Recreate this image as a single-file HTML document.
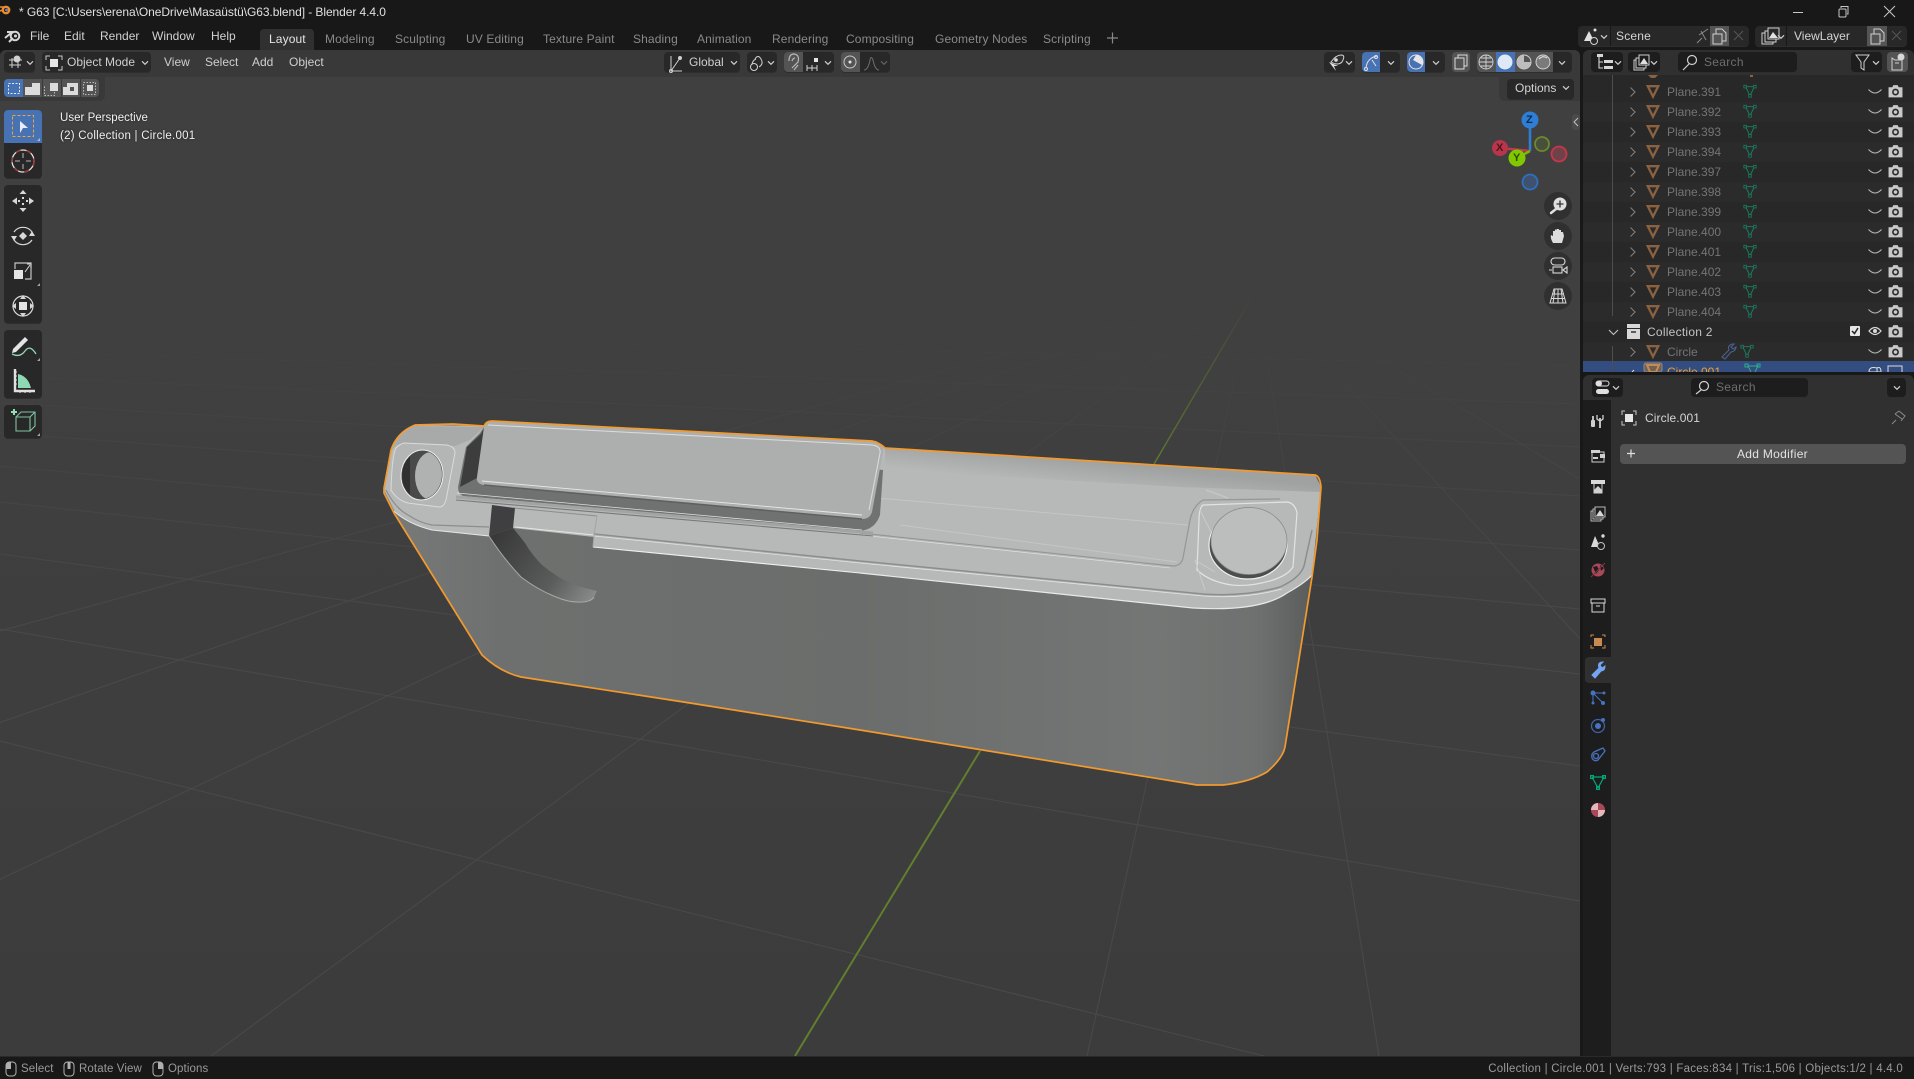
<!DOCTYPE html>
<html><head><meta charset="utf-8"><title>G63 - Blender</title>
<style>
html,body{margin:0;padding:0;background:#181818}
#r{position:relative;width:1914px;height:1079px;overflow:hidden;font-family:"Liberation Sans",sans-serif;font-size:12px;color:#d4d4d4;background:#181818}
#r div{position:absolute;box-sizing:border-box}
.t{white-space:nowrap;line-height:16px;height:16px}
.b{background:#282828;border-radius:4px;box-shadow:0 1px 0 #2e2e2e}
.tab{color:#8a8a8a;letter-spacing:.12px;top:31px}
.m{top:28px;color:#d2d2d2}
.h{top:54px;color:#cfcfcf}
.p{left:1667px;color:#747474;font-size:12px}
svg{position:absolute;left:0;top:0}
</style></head><body><div id="r">

<div style="left:0;top:50px;width:1580px;height:1006px;background:#404040;border-radius:6px 6px 0 0"></div>

<svg width="1914" height="1079" viewBox="0 0 1914 1079" fill="none">
<defs>
<clipPath id="vp"><rect x="0" y="50" width="1580" height="1006"/></clipPath>
<linearGradient id="gr" gradientUnits="userSpaceOnUse" x1="0" y1="295" x2="0" y2="640"><stop offset="0" stop-color="#404040"/><stop offset="1" stop-color="#494949"/></linearGradient>
<linearGradient id="fl" x1="0" y1="0" x2="0" y2="1"><stop offset="0" stop-color="#404040"/><stop offset="1" stop-color="#3c3c3c"/></linearGradient>
<linearGradient id="gl" gradientUnits="userSpaceOnUse" x1="0" y1="295" x2="0" y2="480"><stop offset="0" stop-color="#404040"/><stop offset="1" stop-color="#617f2c"/></linearGradient>
<linearGradient id="side" gradientUnits="userSpaceOnUse" x1="390" y1="0" x2="1322" y2="0"><stop offset="0" stop-color="#787a79"/><stop offset=".12" stop-color="#6e706f"/><stop offset=".5" stop-color="#6b6d6c"/><stop offset=".82" stop-color="#747675"/><stop offset=".93" stop-color="#6f7170"/><stop offset="1" stop-color="#575958"/></linearGradient>
<linearGradient id="topb" gradientUnits="userSpaceOnUse" x1="1100" y1="462" x2="1097" y2="490"><stop offset="0" stop-color="#a0a2a1"/><stop offset="1" stop-color="#b7b9b8"/></linearGradient>
<linearGradient id="gv" gradientUnits="userSpaceOnUse" x1="500" y1="530" x2="597" y2="600"><stop offset="0" stop-color="#39393a"/><stop offset=".6" stop-color="#5a5b5b"/><stop offset="1" stop-color="#8d8f8e"/></linearGradient>
<clipPath id="hole"><ellipse cx="422" cy="475" rx="20" ry="24" transform="rotate(5 422 475)"/></clipPath>
</defs>
<g clip-path="url(#vp)">
<rect x="0" y="300" width="1580" height="756" fill="url(#fl)"/>
<g stroke="url(#gr)" stroke-width="1">
<path d="M0 300L1580 312M0 312L1580 334M0 330L1580 366M0 351L1580 404M0 376L1580 447M0 403L1580 496M0 433L1580 550M0 466L1580 609M0 502L1580 674M0 554L1580 766M0 629L1580 901M0 741L1264 1056"/>
<path d="M1255 285L1379 1056M1255 285L211 1056M1255 285L-373 1056M1255 285L-957 1056M1255 285L1963 1056M1255 285L2547 1056M1255 285L-1541 1056M1255 285L1087 1056"/>
</g>
<path d="M1255 292L1154 464" stroke="url(#gl)" stroke-width="1.400"/>
<path d="M980 751L795 1056" stroke="#617f2c" stroke-width="2"/>

<!-- MODEL -->
<path d="M384 488L391 450Q397 432 415 425L453 424L484 426Q486 421 492 421L872 441Q880 443 885 448L1315 475Q1320 476 1321 487L1317 540L1312 577L1285 747Q1283 758 1267 772Q1250 782 1223 785L1197 785L860 730L690 703L521 677Q500 672 482 655L394 513L384 493Z" fill="url(#side)"/>
<path d="M384 490L394 510Q408 524 432 530L489 536L513 528L594 537L593 547L860 573L1193 608Q1260 612 1287 593Q1305 583 1312 575L1321 487L1315 475L885 448L876 441L492 421L484 426L415 425Q397 432 391 450Z" fill="#b7b9b8"/>
<path d="M885 448L1315 475L1321 487L1320 492L1180 487L885 470Z" fill="url(#topb)"/>
<path d="M392 450Q398 433 415 426L484 427L470 440L455 446L404 443Q396 444 392 450Z" fill="#a8aaa9"/>

<path d="M877 498L1188 525M900 525L1177 562" stroke="#c4c6c5" stroke-width="1"/>
<path d="M860 533L1173 566Q1181 566 1183 558L1190 520Q1193 506 1203 500L1280 499" stroke="#959796" stroke-width="1.200"/>
<path d="M860 535L1170 568" stroke="#e4e4e4" stroke-width=".6"/>
<path d="M860 561L1203 594Q1245 597 1280 587Q1300 578 1304 566L1312 530" stroke="#8c8e8d" stroke-width="1.500"/>
<path d="M860 563L1203 596Q1245 599 1282 589" stroke="#e4e4e4" stroke-width=".8"/>
<path d="M860 573L1193 608Q1260 612 1287 593Q1305 583 1312 575" stroke="#e8e8e8" stroke-width="1.200"/>
<path d="M1203 505L1287 502Q1295 503 1297 513L1293 567Q1288 575 1273 580Q1250 587 1232 585Q1210 582 1197 570L1199 520Q1199 508 1203 505Z" stroke="#e2e2e2" stroke-width="1.200"/>
<path d="M1195 560L1205 590M1200 510L1215 540M1195 560L1215 572M1206 490L1228 498" stroke="#c9cbca" stroke-width="1"/>
<ellipse cx="1248" cy="545" rx="39" ry="34" fill="#4c4c4c" stroke="#f0f0f0" stroke-width="1.200"/>
<ellipse cx="1249" cy="541" rx="38" ry="33.500" fill="#bcbebd" stroke="#858786" stroke-width=".7"/>

<path d="M391 490Q392 455 396 448Q400 444 404 443L447 445Q455 447 455 453L446 500Q444 507 439 507L408 503Q397 500 391 490Z" fill="#b4b6b5" stroke="#dadada" stroke-width="1"/>
<path d="M386 490Q395 508 408 515Q420 523 432 525L489 527" stroke="#8c8e8d" stroke-width="1.200"/>
<path d="M394 511Q408 524 432 530L489 536" stroke="#e6e6e6" stroke-width="1.100"/>
<ellipse cx="422" cy="475" rx="21" ry="25" transform="rotate(5 422 475)" fill="#4a4a4b" stroke="#eeeeee" stroke-width="1"/>
<g clip-path="url(#hole)"><rect x="400" y="450" width="10" height="50" fill="#303030"/><ellipse cx="431" cy="476" rx="16" ry="24" fill="#b0b2b1"/></g>

<path d="M480 433L466 447L458 487Q458 494 463 496L859 531Q875 530 880 515L883 470L484 427Z" fill="#707271"/>
<path d="M481 434L467 447L460 487L477 478L484 428Z" fill="#3d3d3e"/>
<path d="M456 497L873 533" stroke="#a2a4a3" stroke-width="3"/>
<path d="M457 493L862 530" stroke="#dcdcdc" stroke-width=".8"/>
<path d="M456 500L873 536" stroke="#777978" stroke-width="1.100"/>
<path d="M489 421Q484 423 484 427L477 477Q476 484 484 485L862 519Q870 519 872 512L883 452Q885 444 876 442Z" fill="#adafae"/>
<path d="M488 425L872 445Q881 446 880 453L869 510" stroke="#dcdcdc" stroke-width="1"/>
<path d="M484 485L862 519" stroke="#5f6160" stroke-width="1.600"/>
<path d="M482 481L862 515" stroke="#e8e8e8" stroke-width=".9"/>
<path d="M514 508L597 516" stroke="#8c8e8d" stroke-width="1"/>
<path d="M515 527L594 535" stroke="#e6e6e6" stroke-width="1"/>
<path d="M594 534L860 561" stroke="#8c8e8d" stroke-width="1.500"/>
<path d="M594 536L860 563" stroke="#e2e2e2" stroke-width=".7"/>
<path d="M593 547L860 573" stroke="#f0f0f0" stroke-width="1.100"/>
<path d="M597 516L594 535L593 547" stroke="#a3a5a4" stroke-width="1"/>
<path d="M492 505L515 508L513 528L489 536Z" fill="#3f3f41"/>
<path d="M489 536Q503 558 521 577Q538 590 556 597Q570 603 583 602Q592 601 594 597L597 591Q580 587 570 583Q555 576 542 565Q532 555 525 543Q518 534 513 528Z" fill="url(#gv)"/>
<path d="M489 536Q503 558 521 577Q538 590 556 597Q570 603 583 602Q592 601 594 597" stroke="#a7a9a8" stroke-width="1"/>
<path d="M384 488L391 450Q397 432 415 425L453 424L484 426Q486 421 492 421L872 441Q880 443 885 448L1315 475Q1320 476 1321 487L1317 540L1312 577L1285 747Q1283 758 1267 772Q1250 782 1223 785L1197 785L860 730L690 703L521 677Q500 672 482 655L394 513L384 493Z" stroke="#f29a2e" stroke-width="1.700" stroke-linejoin="round"/>
</g>
</svg>

<div style="left:0;top:50px;width:1580px;height:27px;background:#393939;border-radius:6px 6px 0 0"></div>
<div style="left:0;top:77px;width:105px;height:24px;background:#393939;border-radius:0 0 6px 0"></div>
<div style="left:1499px;top:77px;width:81px;height:24px;background:#393939;border-radius:0 0 0 6px"></div>

<div style="left:1580px;top:50px;width:3px;height:1006px;background:#181818"></div>
<div style="left:0;top:1056px;width:1914px;height:23px;background:#181818;border-top:1px solid #2a2a2a"></div>

<div style="left:1583px;top:50px;width:331px;height:322px;background:#282828;border-radius:6px 6px 0 0;overflow:hidden">
<div style="left:0;top:0;width:331px;height:25px;background:#303030"></div>
<div style="left:0;top:52px;width:331px;height:20px;background:#2b2b2b"></div>
<div style="left:0;top:92px;width:331px;height:20px;background:#2b2b2b"></div>
<div style="left:0;top:132px;width:331px;height:20px;background:#2b2b2b"></div>
<div style="left:0;top:172px;width:331px;height:20px;background:#2b2b2b"></div>
<div style="left:0;top:212px;width:331px;height:20px;background:#2b2b2b"></div>
<div style="left:0;top:252px;width:331px;height:20px;background:#2b2b2b"></div>
<div style="left:0;top:292px;width:331px;height:20px;background:#2b2b2b"></div>
<div style="left:0;top:311px;width:331px;height:11px;background:#334d80"></div>
</div>

<div style="left:1583px;top:375px;width:331px;height:681px;background:#303030;border-radius:6px 6px 0 0"></div>
<div style="left:1583px;top:400px;width:28px;height:656px;background:#1d1d1d"></div>
<div style="left:1585px;top:657px;width:26px;height:26px;background:#303030;border-radius:4px 0 0 4px"></div>
<div style="left:1620px;top:444px;width:286px;height:20px;background:#545454;border-radius:4px"></div>

<div style="left:260px;top:29px;width:54px;height:21px;background:#303030;border-radius:4px 4px 0 0"></div>
<div class="b" style="left:4px;top:52px;width:31px;height:20px"></div>
<div class="b" style="left:42px;top:52px;width:109px;height:20px"></div>
<div class="b" style="left:664px;top:52px;width:76px;height:20px"></div>
<div class="b" style="left:747px;top:52px;width:30px;height:20px"></div>
<div class="b" style="left:784px;top:52px;width:50px;height:20px"></div>
<div style="left:784px;top:52px;width:19px;height:20px;background:#545454;border-radius:4px 0 0 4px"></div>
<div class="b" style="left:841px;top:52px;width:49px;height:20px"></div>
<div style="left:841px;top:52px;width:19px;height:20px;background:#545454;border-radius:4px 0 0 4px"></div>
<div class="b" style="left:1324px;top:52px;width:31px;height:20px"></div>
<div class="b" style="left:1362px;top:52px;width:38px;height:20px"></div>
<div style="left:1362px;top:52px;width:18px;height:20px;background:#4772b3;border-radius:4px 0 0 4px"></div>
<div class="b" style="left:1407px;top:52px;width:38px;height:20px"></div>
<div style="left:1407px;top:52px;width:18px;height:20px;background:#4772b3;border-radius:4px 0 0 4px"></div>
<div style="left:1452px;top:52px;width:18px;height:20px;background:#545454;border-radius:4px"></div>
<div class="b" style="left:1477px;top:52px;width:95px;height:20px"></div>
<div style="left:1477px;top:52px;width:76px;height:20px;background:#545454;border-radius:4px 0 0 4px"></div>
<div style="left:1496px;top:52px;width:19px;height:20px;background:#4772b3"></div>
<div class="b" style="left:1507px;top:79px;width:67px;height:20px"></div>
<div style="left:4px;top:79px;width:95px;height:18px;background:#545454;border-radius:4px"></div>
<div style="left:4px;top:79px;width:19px;height:18px;background:#4772b3;border-radius:4px 0 0 4px"></div>
<div style="left:42px;top:79px;width:1px;height:18px;background:#393939"></div>
<div style="left:61px;top:79px;width:1px;height:18px;background:#393939"></div>
<div style="left:80px;top:79px;width:1px;height:18px;background:#393939"></div>

<div class="b" style="left:1578px;top:26px;width:171px;height:20px"></div>
<div style="left:1610px;top:26px;width:1px;height:20px;background:#181818"></div>
<div style="left:1710px;top:26px;width:19px;height:20px;background:#545454"></div>
<div class="b" style="left:1755px;top:26px;width:152px;height:20px"></div>
<div style="left:1786px;top:26px;width:1px;height:20px;background:#181818"></div>
<div style="left:1867px;top:26px;width:20px;height:20px;background:#545454"></div>

<div class="b" style="left:1591px;top:52px;width:32px;height:20px;background:#1d1d1d"></div>
<div class="b" style="left:1628px;top:52px;width:32px;height:20px;background:#1d1d1d"></div>
<div class="b" style="left:1678px;top:52px;width:119px;height:20px;background:#1d1d1d"></div>
<div class="b" style="left:1851px;top:52px;width:31px;height:20px;background:#1d1d1d"></div>
<div style="left:1887px;top:52px;width:21px;height:20px;background:#545454;border-radius:4px"></div>

<div class="b" style="left:1592px;top:378px;width:31px;height:19px;background:#1d1d1d"></div>
<div class="b" style="left:1691px;top:378px;width:117px;height:19px;background:#1d1d1d"></div>
<div class="b" style="left:1887px;top:378px;width:19px;height:19px;background:#1d1d1d"></div>

<div class="b" style="left:4px;top:110px;width:38px;height:68px"></div>
<div style="left:4px;top:110px;width:38px;height:33px;background:#4772b3;border-radius:4px 4px 0 0"></div>
<div class="b" style="left:4px;top:185px;width:38px;height:138px"></div>
<div class="b" style="left:4px;top:330px;width:38px;height:68px"></div>
<div class="b" style="left:4px;top:405px;width:38px;height:33px"></div>

<svg width="1914" height="1079" viewBox="0 0 1914 1079" fill="none">
<defs>
<symbol id="obj" viewBox="0 0 16 16" overflow="visible"><path d="M2 2.500H14L8 14.500Z" stroke="#8a6240" stroke-width="2.600" stroke-linejoin="miter"/></symbol>
<symbol id="mesh" viewBox="0 0 16 16" overflow="visible"><path d="M3 3H13L8 13.500Z" stroke="#1a7a5e" stroke-width="1.200"/><rect x="1" y="1.500" width="3" height="3" fill="#282828" stroke="#1a7a5e"/><rect x="12" y="1.500" width="3" height="3" fill="#282828" stroke="#1a7a5e"/><rect x="6.500" y="12" width="3" height="3" fill="#282828" stroke="#1a7a5e"/></symbol>
<symbol id="cam" viewBox="0 0 14 14" overflow="visible"><path d="M0.500 3H4L5 1H9L10 3H13.500V12.500H0.500Z" fill="#c9c9c9"/><circle cx="7" cy="7.500" r="3.200" fill="#2a2a2a"/><circle cx="7" cy="7.500" r="1.700" fill="#c9c9c9"/></symbol>
<symbol id="eyec" viewBox="0 0 14 8" overflow="visible"><path d="M0.500 1.500Q7 8.500 13.500 1.500" stroke="#b4b4b4" stroke-width="1.100"/></symbol>
<symbol id="chr" viewBox="0 0 8 12" overflow="visible"><path d="M1.500 1.500L6 6L1.500 10.500" stroke="#7e7e7e" stroke-width="1.100"/></symbol>
<symbol id="dn" viewBox="0 0 8 6" overflow="visible"><path d="M1 1.300L4 4.300L7 1.300" stroke="#d0d0d0" stroke-width="1.200"/></symbol>
</defs>

<!-- Title bar -->
<circle cx="6" cy="10" r="3.200" stroke="#ee8a2a" stroke-width="2.400"/><path d="M0 7L5 7M0 11L3 10" stroke="#ee8a2a" stroke-width="1.600"/><circle cx="6.500" cy="10" r="1.400" fill="#5e8fd0"/>
<g stroke="#c8c8c8"><path d="M1793 12.500H1803M1884 6L1895 17M1895 6L1884 17" stroke-width="1"/><rect x="1839" y="9" width="7" height="8" rx="1" stroke-width="1"/><path d="M1841 8V6.500H1848V14H1847" stroke-width="1"/></g>
<g stroke="#d6d6d6"><circle cx="15" cy="36" r="4.300" stroke-width="2"/><path d="M5 38L11 33M7 32H14M9 42L13 38" stroke-width="2"/></g>
<circle cx="15.500" cy="36" r="1.500" fill="#d6d6d6"/>
<path d="M1107 38H1118M1112.500 32.500V43.500" stroke="#888" stroke-width="1.200"/>

<!-- header icons -->
<g stroke="#cfcfcf" stroke-width="1"><path d="M9 60H22M9 65H21M12 58V68M18 58V68"/><circle cx="17" cy="59" r="3" fill="#cfcfcf"/></g>
<use href="#dn" x="26" y="60" width="8" height="6"/>
<rect x="50" y="59" width="8" height="8" fill="#e6e6e6"/><path d="M46 60V56H50M58 56H62V60M62 66V70H58M50 70H46V66" stroke="#c8c8c8" stroke-width="1"/>
<use href="#dn" x="141" y="60" width="8" height="6"/>
<g stroke="#d0d0d0" stroke-width="1"><path d="M671 56V71H682M671 71L680 58" /><circle cx="671" cy="71" r="1.500"/><circle cx="680" cy="58" r="1.500" fill="#d0d0d0"/></g>
<use href="#dn" x="730" y="60" width="8" height="6"/>
<g stroke="#d0d0d0" stroke-width="1"><circle cx="754" cy="67" r="3.500"/><path d="M755 59Q758 54 761 59T759 67M752 64Q753 60 756 59"/></g>
<use href="#dn" x="767" y="60" width="8" height="6"/>
<g stroke="#b8b8b8" stroke-width="1.200"><path d="M789 61Q789 54 794 54Q800 55 798 62L792 68M792 61Q793 58 795 58M794 70L798 65"/></g>
<g stroke="#d0d0d0" stroke-width="1"><path d="M807 65V71M812 65V71M817 65V71M807 68H817"/></g><rect x="814" y="58" width="4" height="4" fill="#e6e6e6"/>
<use href="#dn" x="824" y="60" width="8" height="6"/>
<circle cx="850" cy="62" r="6" stroke="#c8c8c8"/><circle cx="850" cy="62" r="1.500" fill="#e6e6e6"/>
<path d="M864 70Q868 70 870 60Q871 55 873 60Q875 70 879 70" stroke="#6e6e6e"/>
<use href="#dn" x="880" y="60" width="8" height="6" opacity=".35"/>

<g stroke="#d4d4d4"><path d="M1331 62Q1336 55 1341 55T1342 62Q1338 66 1331 62Z" fill="#303030"/></g><circle cx="1336" cy="60" r="1.800" fill="#e0e0e0"/><path d="M1329 62L1336 71L1334 66L1338 66Z" fill="#e0e0e0"/>
<use href="#dn" x="1345" y="60" width="8" height="6"/>
<g stroke="#e2e2e2"><path d="M1366 68Q1367 58 1377 56"/><circle cx="1366" cy="69" r="1.500"/><circle cx="1376" cy="57" r="1.500"/><path d="M1372 60L1376 66"/></g>
<use href="#dn" x="1387" y="60" width="8" height="6"/>
<circle cx="1416" cy="62" r="7" stroke="#e6e6e6"/><path d="M1416 55A7 7 0 0 1 1422 65L1413 60Z" fill="#e6e6e6"/>
<use href="#dn" x="1432" y="60" width="8" height="6"/>
<g stroke="#dcdcdc" stroke-width="1"><rect x="1455" y="58" width="9" height="11" /><path d="M1458 58V55H1467V66H1464"/></g>
<g stroke="#d4d4d4" stroke-width=".9"><circle cx="1486" cy="62" r="7"/><path d="M1479 62H1493M1486 55V69M1481 58H1491M1481 66H1491"/></g>
<ellipse cx="1505" cy="62" rx="7.500" ry="7.500" fill="#dfe8f6"/>
<circle cx="1524" cy="62" r="7" stroke="#d4d4d4"/><path d="M1524 55A7 7 0 0 0 1524 69A7 7 0 0 0 1531 62H1524Z" fill="#bdbdbd"/>
<circle cx="1543" cy="62" r="7" stroke="#d4d4d4" fill="#7a7a7a"/><path d="M1539 59Q1543 55 1547 58" stroke="#eee"/>
<use href="#dn" x="1558" y="60" width="8" height="6"/>
<use href="#dn" x="1562" y="85" width="8" height="6"/>

<!-- selection modes -->
<rect x="8.500" y="83.500" width="11" height="10" stroke="#eaeaea" stroke-dasharray="2 1.500"/>
<path d="M25 87H32V83H40V95H25Z" fill="#dcdcdc"/>
<rect x="50" y="83" width="8" height="8" fill="#dcdcdc"/><path d="M44.500 86.500V95.500H54.500V92" stroke="#bcbcbc" stroke-dasharray="1.500 1.500"/>
<path d="M67 83H78V95H63V87H67Z M70 87V91H74V87Z" fill="#dcdcdc" fill-rule="evenodd"/>
<rect x="83.500" y="82.500" width="12" height="12" stroke="#bcbcbc" stroke-dasharray="1.500 1.500"/><rect x="87" y="85" width="6" height="6" fill="#dcdcdc"/>

<!-- Toolbar -->
<rect x="12.500" y="115.500" width="21" height="21" stroke="#f2a63a" stroke-width="1" stroke-dasharray="3 2"/>
<path d="M20 121L28 128L23 128L20 133Z" fill="#e8eef8"/>
<path d="M40 141L37 141L40 138Z" fill="#a8bbd8"/>
<circle cx="23" cy="161" r="11" stroke="#e0e0e0" stroke-width="1.300"/><circle cx="23" cy="161" r="11" stroke="#a13b3b" stroke-width="1.500" stroke-dasharray="5 6"/>
<path d="M23 153V158M23 164V169M15 161H20M26 161H31" stroke="#999" stroke-width="1.300"/>
<g fill="#d8d8d8"><path d="M23 190L26.500 194H19.500ZM23 212L26.500 208H19.500ZM12 201L17 197.500V204.500ZM34 201L29 197.500V204.500Z"/><rect x="22" y="197" width="2" height="2"/><rect x="22" y="203" width="2" height="2"/><rect x="18" y="200" width="2" height="2"/><rect x="26" y="200" width="2" height="2"/></g>
<g stroke="#d8d8d8" stroke-width="1.200"><path d="M14 232A11 11 0 0 1 32 232M14 240A11 11 0 0 0 32 240"/></g><g fill="#d8d8d8"><path d="M23 232L27 236L23 240L19 236Z"/><path d="M11 236H17L14 241ZM29 236H35L32 231Z"/></g>
<rect x="14" y="270" width="9" height="9" fill="#e4e4e4"/><path d="M15 269V263H31V279H25" stroke="#c4c4c4" stroke-width="1.200"/><path d="M25 272L30 265M27 264H31V268" stroke="#d8d8d8"/>
<circle cx="23" cy="306" r="10" stroke="#d8d8d8" stroke-width="1.200"/><rect x="19" y="302" width="8" height="8" fill="#e4e4e4"/><g fill="#d8d8d8"><path d="M23 295L26 299H20ZM23 317L26 313H20ZM12 306L16 303V309ZM34 306L30 303V309Z"/></g>
<path d="M13 349L25 337L28 340L16 352L12 353Z" fill="#e4e4e4"/><path d="M12 354Q20 358 25 351T36 354" stroke="#8fd8b4" stroke-width="1.300"/>
<path d="M15 369V391H35" stroke="#e0e0e0" stroke-width="2.400"/><path d="M18 374Q28 376 31 388H18Z" fill="#8fd8b4"/><path d="M14 372H17M14 376H17M14 380H17M14 384H17M20 393V390M25 393V390M30 393V390" stroke="#e0e0e0" stroke-width="1"/>
<path d="M16 417H30V431H16ZM16 417L21 412H35V426L30 431M30 417L35 412" stroke="#7cc4a2" stroke-width="1.100"/>
<path d="M14 409V415M11 412H17" stroke="#8fe0b8" stroke-width="2"/>
<g fill="#a3a3a3"><path d="M40 286L37 286L40 283ZM40 361L37 361L40 358ZM40 436L37 436L40 433Z"/></g>

<!-- Nav gizmo -->
<path d="M1530 120V151" stroke="#2e7ed6" stroke-width="2.500"/><path d="M1500 148L1530 151" stroke="#c23a50" stroke-width="2.500"/><path d="M1517 158L1530 151" stroke="#7fb800" stroke-width="2.500"/>
<circle cx="1542" cy="144" r="7" stroke="#6b8a2a" stroke-width="1.800" fill="#48503c"/>
<circle cx="1559" cy="154" r="7.500" stroke="#c7364b" stroke-width="1.800" fill="#6f4249"/>
<circle cx="1530" cy="182" r="7.500" stroke="#2f6fbc" stroke-width="1.800" fill="#3e5270"/>
<circle cx="1530" cy="120" r="8.500" fill="#2e7ed6"/>
<circle cx="1500" cy="148" r="8" fill="#b9354c"/>
<circle cx="1517" cy="158" r="8.500" fill="#82c800"/>
<g fill="#303030"><circle cx="1558" cy="206" r="14"/><circle cx="1558" cy="236" r="14"/><circle cx="1558" cy="266" r="14"/><circle cx="1558" cy="296" r="14"/></g>
<circle cx="1560" cy="204" r="6.500" fill="#e0e0e0"/><path d="M1556 209L1551 213" stroke="#e0e0e0" stroke-width="2.500" stroke-linecap="round"/><path d="M1556.500 204H1563.500M1560 200.500V207.500" stroke="#303030" stroke-width="1.300"/>
<path d="M1553 243Q1550 238 1551 235L1553 236L1553 231H1555V229.500H1557V229H1559V230H1561V232H1563L1564 236L1562 243Z" fill="#dcdcdc"/>
<g stroke="#d8d8d8" stroke-width="1.100"><rect x="1551" y="258" width="14" height="7" rx="3.500"/><rect x="1553" y="267" width="9" height="6"/><path d="M1567 267L1563 270L1567 273ZM1549 270H1552"/></g>
<path d="M1554 289H1562L1566 303H1550ZM1558 289V303M1552 294H1564M1551 298.500H1565M1555 289L1553 303M1561 289L1563 303" stroke="#d8d8d8" stroke-width="1"/>
<rect x="1572" y="114" width="8" height="16" rx="3" fill="#4a4a4a"/><path d="M1578 118L1574 122L1578 126" stroke="#c0c0c0"/>

<!-- Scene selectors -->
<path d="M1589 31L1594 41H1584Z" fill="#e0e0e0"/><circle cx="1594" cy="41" r="3.500" stroke="#d0d0d0" fill="#282828"/><circle cx="1595" cy="30" r="1.500" fill="#e0e0e0"/>
<use href="#dn" x="1600" y="34" width="8" height="6"/>
<path d="M1697 43L1702 38M1699 35L1708 29M1701 31L1706 40" stroke="#8a8a8a"/>
<g stroke="#d0d0d0"><rect x="1713" y="34" width="9" height="10"/><path d="M1716 34V29H1722L1726 33V41H1722"/></g>
<path d="M1734 31L1743 40M1743 31L1734 40" stroke="#555"/>
<g stroke="#d0d0d0"><rect x="1762" y="33" width="11" height="11" fill="#282828"/><rect x="1765" y="31" width="11" height="11" fill="#282828"/><rect x="1768" y="28" width="11" height="11" fill="#282828"/></g><path d="M1769 38L1773 32L1778 38Z" fill="#e0e0e0"/>
<use href="#dn" x="1777" y="34" width="8" height="6"/>
<g stroke="#d0d0d0"><rect x="1871" y="34" width="9" height="10"/><path d="M1874 34V29H1880L1884 33V41H1880"/></g>
<path d="M1892 31L1901 40M1901 31L1892 40" stroke="#555"/>

<!-- Outliner header icons -->
<g stroke="#d6d6d6" stroke-width="1.100"><path d="M1599 56V68H1603M1599 62H1603"/></g><g fill="#d6d6d6"><rect x="1597" y="54" width="6" height="3"/><rect x="1604" y="60" width="9" height="3"/><rect x="1604" y="66" width="9" height="3"/></g>
<use href="#dn" x="1614" y="60" width="8" height="6"/>
<g stroke="#d0d0d0"><rect x="1634" y="60" width="10" height="10" fill="#1d1d1d"/><rect x="1636" y="58" width="10" height="10" fill="#1d1d1d"/><rect x="1639" y="55" width="10" height="10" fill="#1d1d1d"/></g><path d="M1640 64L1644 58L1648 64Z" fill="#e0e0e0"/>
<use href="#dn" x="1650" y="60" width="8" height="6"/>
<circle cx="1692" cy="60" r="4.500" stroke="#d0d0d0" stroke-width="1.200"/><path d="M1689 64L1683 70" stroke="#d0d0d0" stroke-width="1.200"/>
<path d="M1856 55H1869L1864 62V70L1861 68V62Z" stroke="#d0d0d0"/>
<use href="#dn" x="1872" y="60" width="8" height="6"/>
<path d="M1892 58V70H1902V60H1895Z" stroke="#d0d0d0"/><circle cx="1901" cy="57" r="3.500" fill="#d8d8d8"/><path d="M1895 63H1899" stroke="#d0d0d0"/>

<!-- Outliner tree -->
<path d="M1612.500 75V316M1612.500 346V372" stroke="#4e4e4e"/>
<use href="#chr" x="1629" y="86" width="8" height="12"/><use href="#chr" x="1629" y="106" width="8" height="12"/><use href="#chr" x="1629" y="126" width="8" height="12"/><use href="#chr" x="1629" y="146" width="8" height="12"/><use href="#chr" x="1629" y="166" width="8" height="12"/><use href="#chr" x="1629" y="186" width="8" height="12"/><use href="#chr" x="1629" y="206" width="8" height="12"/><use href="#chr" x="1629" y="226" width="8" height="12"/><use href="#chr" x="1629" y="246" width="8" height="12"/><use href="#chr" x="1629" y="266" width="8" height="12"/><use href="#chr" x="1629" y="286" width="8" height="12"/><use href="#chr" x="1629" y="306" width="8" height="12"/><use href="#chr" x="1629" y="346" width="8" height="12"/>
<g>
<use href="#obj" x="1646" y="84" width="14" height="14"/><use href="#obj" x="1646" y="104" width="14" height="14"/><use href="#obj" x="1646" y="124" width="14" height="14"/><use href="#obj" x="1646" y="144" width="14" height="14"/><use href="#obj" x="1646" y="164" width="14" height="14"/><use href="#obj" x="1646" y="184" width="14" height="14"/><use href="#obj" x="1646" y="204" width="14" height="14"/><use href="#obj" x="1646" y="224" width="14" height="14"/><use href="#obj" x="1646" y="244" width="14" height="14"/><use href="#obj" x="1646" y="264" width="14" height="14"/><use href="#obj" x="1646" y="284" width="14" height="14"/><use href="#obj" x="1646" y="304" width="14" height="14"/><use href="#obj" x="1646" y="344" width="14" height="14"/>
<use href="#mesh" x="1743" y="84" width="14" height="14"/><use href="#mesh" x="1743" y="104" width="14" height="14"/><use href="#mesh" x="1743" y="124" width="14" height="14"/><use href="#mesh" x="1743" y="144" width="14" height="14"/><use href="#mesh" x="1743" y="164" width="14" height="14"/><use href="#mesh" x="1743" y="184" width="14" height="14"/><use href="#mesh" x="1743" y="204" width="14" height="14"/><use href="#mesh" x="1743" y="224" width="14" height="14"/><use href="#mesh" x="1743" y="244" width="14" height="14"/><use href="#mesh" x="1743" y="264" width="14" height="14"/><use href="#mesh" x="1743" y="284" width="14" height="14"/><use href="#mesh" x="1743" y="304" width="14" height="14"/><use href="#mesh" x="1740" y="344" width="14" height="14"/>
<use href="#eyec" x="1868" y="88" width="14" height="8"/><use href="#eyec" x="1868" y="108" width="14" height="8"/><use href="#eyec" x="1868" y="128" width="14" height="8"/><use href="#eyec" x="1868" y="148" width="14" height="8"/><use href="#eyec" x="1868" y="168" width="14" height="8"/><use href="#eyec" x="1868" y="188" width="14" height="8"/><use href="#eyec" x="1868" y="208" width="14" height="8"/><use href="#eyec" x="1868" y="228" width="14" height="8"/><use href="#eyec" x="1868" y="248" width="14" height="8"/><use href="#eyec" x="1868" y="268" width="14" height="8"/><use href="#eyec" x="1868" y="288" width="14" height="8"/><use href="#eyec" x="1868" y="308" width="14" height="8"/><use href="#eyec" x="1868" y="348" width="14" height="8"/>
<use href="#cam" x="1888" y="84" width="15" height="15"/><use href="#cam" x="1888" y="104" width="15" height="15"/><use href="#cam" x="1888" y="124" width="15" height="15"/><use href="#cam" x="1888" y="144" width="15" height="15"/><use href="#cam" x="1888" y="164" width="15" height="15"/><use href="#cam" x="1888" y="184" width="15" height="15"/><use href="#cam" x="1888" y="204" width="15" height="15"/><use href="#cam" x="1888" y="224" width="15" height="15"/><use href="#cam" x="1888" y="244" width="15" height="15"/><use href="#cam" x="1888" y="264" width="15" height="15"/><use href="#cam" x="1888" y="284" width="15" height="15"/><use href="#cam" x="1888" y="304" width="15" height="15"/><use href="#cam" x="1888" y="324" width="15" height="15"/><use href="#cam" x="1888" y="344" width="15" height="15"/>
</g>
<path d="M1648 75H1658L1655 78H1651ZM1750 75H1753V77H1750ZM1884 75H1895" fill="#8a6240" stroke="none"/>
<path d="M1609 330L1613.500 334.500L1618 330" stroke="#c4c4c4" stroke-width="1.100"/>
<rect x="1627" y="324" width="13" height="4" fill="#d8d8d8"/><path d="M1627 329H1640V339H1627Z" fill="#d8d8d8"/><path d="M1631 332H1636" stroke="#282828" stroke-width="1.400"/>
<rect x="1850" y="326" width="10" height="10" rx="1" fill="#e6e6e6"/><path d="M1852 331L1854.500 333.500L1858 328" stroke="#222" stroke-width="1.500"/>
<path d="M1869 331Q1875 324 1881 331Q1875 338 1869 331Z" stroke="#d8d8d8" stroke-width="1.200"/><circle cx="1875" cy="331" r="2" fill="#d8d8d8"/>
<path d="M1722 357L1729 350Q1727 346 1732 344L1734 344L1731 347L1733 349L1736 347Q1736 351 1731 352L1725 359Z" stroke="#4a6090" stroke-width="1.100"/>
<rect x="1644" y="363" width="18" height="9" rx="2" fill="#6d6257" stroke="#8d8a88"/><path d="M1647 365H1659L1656 372H1650Z" stroke="#c88a50" stroke-width="2"/>
<path d="M1632 372L1634 370M1877 372V368Q1869 366 1869 372H1881Q1881 366 1877 368M1888 372V366H1902V372" stroke="#dcdcdc"/>
<path d="M1748 366H1758L1755 372M1748 366L1751 372" stroke="#2bb08a"/><rect x="1745" y="364" width="3" height="3" stroke="#2bb08a"/><rect x="1757" y="364" width="3" height="3" stroke="#2bb08a"/>
<rect x="1583" y="372" width="331" height="3" fill="#181818"/>

<!-- Properties icons -->
<rect x="1591" y="420" width="4" height="7" rx="1" fill="#d0d0d0"/><path d="M1593 416V420M1600 418V428" stroke="#d0d0d0" stroke-width="1.800"/><path d="M1597 415V419Q1600 422 1603 419V415" stroke="#d0d0d0" stroke-width="1.300"/>
<path d="M1592 452H1604V462H1592Z" stroke="#d0d0d0"/><path d="M1591 450H1600V453H1591ZM1600 454H1605V458H1600Z" fill="#d0d0d0"/><path d="M1593 457H1598V459H1593Z" fill="#d0d0d0"/>
<path d="M1591 480H1605V484H1591Z" fill="#d8d8d8"/><path d="M1594 484V493H1602V484" stroke="#d0d0d0"/><path d="M1594 490L1598 486L1602 490V493H1594Z" fill="#d0d0d0"/>
<g stroke="#b8b8b8"><rect x="1591" y="511" width="10" height="10"/><rect x="1593" y="509" width="10" height="10" fill="#1d1d1d"/><rect x="1595" y="507" width="10" height="10" fill="#1d1d1d"/></g><path d="M1596 516L1600 510L1604 516Z" fill="#d8d8d8"/>
<path d="M1595 536L1600 547H1591Z" fill="#d8d8d8"/><circle cx="1601" cy="546" r="3.500" stroke="#c0c0c0" fill="#1d1d1d"/><circle cx="1603" cy="536" r="1.700" fill="#d8d8d8"/>
<circle cx="1598" cy="570" r="6.500" fill="#a84858"/><path d="M1593 567L1597 566L1599 570L1596 574ZM1600 565L1604 568L1601 571Z" fill="#1d1d1d"/><path d="M1591 577L1605 563" stroke="#803644"/>
<path d="M1591 599H1605V603H1591Z" stroke="#d8d8d8"/><path d="M1592 603V612H1604V603" stroke="#d8d8d8"/><path d="M1596 606H1600" stroke="#d8d8d8"/>
<rect x="1594" y="638" width="8" height="8" fill="#c88a50"/><path d="M1591 637V635H1594M1602 635H1605V637M1605 645V648H1602M1594 648H1591V645" stroke="#c88a50"/>
<path d="M1592 675L1599 668Q1597 662 1603 662L1600 665L1602 668L1605 666Q1605 671 1601 671L1595 678Z" fill="#74a5f5" stroke="#74a5f5"/>
<g fill="#4872c0"><circle cx="1593" cy="693" r="2.500"/><circle cx="1603" cy="703" r="2"/><circle cx="1593" cy="703" r="1.500"/><circle cx="1604" cy="693" r="1.500"/></g><path d="M1593 693L1603 703M1593 693V703M1593 693H1604" stroke="#4872c0"/>
<circle cx="1598" cy="726" r="6.500" stroke="#3e62a8" stroke-width="1.300"/><circle cx="1598" cy="726" r="3" fill="#4872c0"/><circle cx="1603" cy="720" r="2" fill="#4872c0"/>
<path d="M1603 748L1605 751L1598 760Q1594 762 1592 758Q1591 754 1594 752Z" stroke="#4872c0" stroke-width="1.300"/><circle cx="1596" cy="756" r="2.500" stroke="#4872c0" stroke-width="1.300"/>
<path d="M1592 777H1604L1598 788Z" stroke="#00a878" stroke-width="1.200"/><rect x="1590.500" y="775.500" width="3" height="3" stroke="#00a878"/><rect x="1602.500" y="775.500" width="3" height="3" stroke="#00a878"/><rect x="1596.500" y="786.500" width="3" height="3" stroke="#00a878"/>
<circle cx="1598" cy="810" r="7" fill="#a84858"/><path d="M1598 803V810H1591A7 7 0 0 1 1598 803ZM1598 810H1605A7 7 0 0 1 1598 817Z" fill="#e2b8bc"/>

<rect x="1596" y="381" width="13" height="5" rx="2.500" stroke="#e0e0e0" fill="#1d1d1d"/><rect x="1596" y="389" width="13" height="5" rx="2.500" fill="#e0e0e0"/><rect x="1596" y="381" width="6" height="5" rx="2.500" fill="#e0e0e0"/>
<use href="#dn" x="1612" y="385" width="8" height="6"/>
<use href="#dn" x="1893" y="385" width="8" height="6"/>
<circle cx="1704" cy="386" r="4.500" stroke="#d0d0d0" stroke-width="1.200"/><path d="M1701 390L1696 394" stroke="#d0d0d0" stroke-width="1.200"/>
<rect x="1625" y="414" width="8" height="8" fill="#e6e6e6"/><path d="M1622 415V411H1625M1633 411H1636V415M1636 421V425H1633M1625 425H1622V421" stroke="#c8c8c8"/>
<path d="M1892 424L1896 420M1895 414L1902 419M1899 411L1905 416L1901 421M1899 411L1895 414" stroke="#8a8a8a" stroke-width="1"/>
<path d="M1627 453.500H1635M1631 449.500V457.500" stroke="#e0e0e0" stroke-width="1.200"/>

<!-- status icons -->
<g stroke="#b0b0b0" fill="none"><rect x="6" y="1062" width="10" height="14" rx="3.500"/><rect x="64" y="1062" width="10" height="14" rx="3.500"/><rect x="153" y="1062" width="10" height="14" rx="3.500"/></g>
<path d="M6.500 1069V1065Q6.500 1062 11 1062V1069Z" fill="#b0b0b0"/><rect x="67.500" y="1062" width="3" height="7" fill="#b0b0b0"/><path d="M158 1062H160Q163 1063 163 1066V1069H158Z" fill="#b0b0b0"/>
</svg>

<div class="t" style="left:19px;top:4px;letter-spacing:-.07px;color:#e0e0e0">* G63 [C:\Users\erena\OneDrive\Masaüstü\G63.blend] - Blender 4.4.0</div>
<div class="t m" style="left:30px">File</div><div class="t m" style="left:64px">Edit</div><div class="t m" style="left:100px">Render</div><div class="t m" style="left:152px">Window</div><div class="t m" style="left:211px">Help</div>
<div class="t tab" style="left:269px;color:#e4e4e4">Layout</div><div class="t tab" style="left:325px">Modeling</div><div class="t tab" style="left:395px">Sculpting</div><div class="t tab" style="left:466px">UV Editing</div><div class="t tab" style="left:543px">Texture Paint</div><div class="t tab" style="left:633px">Shading</div><div class="t tab" style="left:697px">Animation</div><div class="t tab" style="left:772px">Rendering</div><div class="t tab" style="left:846px">Compositing</div><div class="t tab" style="left:935px">Geometry Nodes</div><div class="t tab" style="left:1043px">Scripting</div>

<div class="t h" style="left:67px">Object Mode</div><div class="t h" style="left:164px">View</div><div class="t h" style="left:205px">Select</div><div class="t h" style="left:252px">Add</div><div class="t h" style="left:289px">Object</div><div class="t h" style="left:689px">Global</div>
<div class="t" style="left:1515px;top:80px;color:#d4d4d4">Options</div>
<div class="t" style="left:60px;top:110px;font-size:11.500px;color:#f0f0f0;letter-spacing:.02px;text-shadow:0 0 2px #222">User Perspective</div>
<div class="t" style="left:60px;top:128px;font-size:11.500px;color:#f0f0f0;letter-spacing:.24px;text-shadow:0 0 2px #222">(2) Collection | Circle.001</div>

<div class="t" style="left:1526px;top:112px;font-size:11px;font-weight:bold;color:#0e2a4c">Z</div>
<div class="t" style="left:1496px;top:140px;font-size:11px;font-weight:bold;color:#4a1420">X</div>
<div class="t" style="left:1513px;top:150px;font-size:11px;font-weight:bold;color:#2c4a00">Y</div>

<div class="t" style="left:1616px;top:28px;color:#d4d4d4;letter-spacing:.2px">Scene</div>
<div class="t" style="left:1794px;top:28px;color:#d4d4d4">ViewLayer</div>
<div class="t" style="left:1704px;top:54px;color:#6e6e6e;letter-spacing:.3px">Search</div>
<div class="t" style="left:1716px;top:379px;color:#6e6e6e;letter-spacing:.3px">Search</div>

<div class="t p" style="top:84px">Plane.391</div><div class="t p" style="top:104px">Plane.392</div><div class="t p" style="top:124px">Plane.393</div><div class="t p" style="top:144px">Plane.394</div><div class="t p" style="top:164px">Plane.397</div><div class="t p" style="top:184px">Plane.398</div><div class="t p" style="top:204px">Plane.399</div><div class="t p" style="top:224px">Plane.400</div><div class="t p" style="top:244px">Plane.401</div><div class="t p" style="top:264px">Plane.402</div><div class="t p" style="top:284px">Plane.403</div><div class="t p" style="top:304px">Plane.404</div>
<div class="t" style="left:1647px;top:324px;color:#c4c4c4;letter-spacing:.25px">Collection 2</div>
<div class="t p" style="top:344px">Circle</div>
<div style="left:1667px;top:364px;width:70px;height:8px;overflow:hidden"><div class="t" style="left:0;top:0;color:#f0a030">Circle.001</div></div>

<div class="t" style="left:1645px;top:410px;color:#d4d4d4;letter-spacing:.1px">Circle.001</div>
<div class="t" style="left:1737px;top:446px;color:#e2e2e2;letter-spacing:.3px">Add Modifier</div>

<div class="t" style="left:21px;top:1061px;color:#9a9a9a;font-size:11.500px;letter-spacing:.1px">Select</div>
<div class="t" style="left:79px;top:1061px;color:#9a9a9a;font-size:11.500px;letter-spacing:.1px">Rotate View</div>
<div class="t" style="left:168px;top:1061px;color:#9a9a9a;font-size:11.500px;letter-spacing:.1px">Options</div>
<div class="t" style="right:11px;top:1061px;color:#9a9a9a;font-size:11.500px;letter-spacing:.24px">Collection | Circle.001 | Verts:793 | Faces:834 | Tris:1,506 | Objects:1/2 | 4.4.0</div>
</div></body></html>
